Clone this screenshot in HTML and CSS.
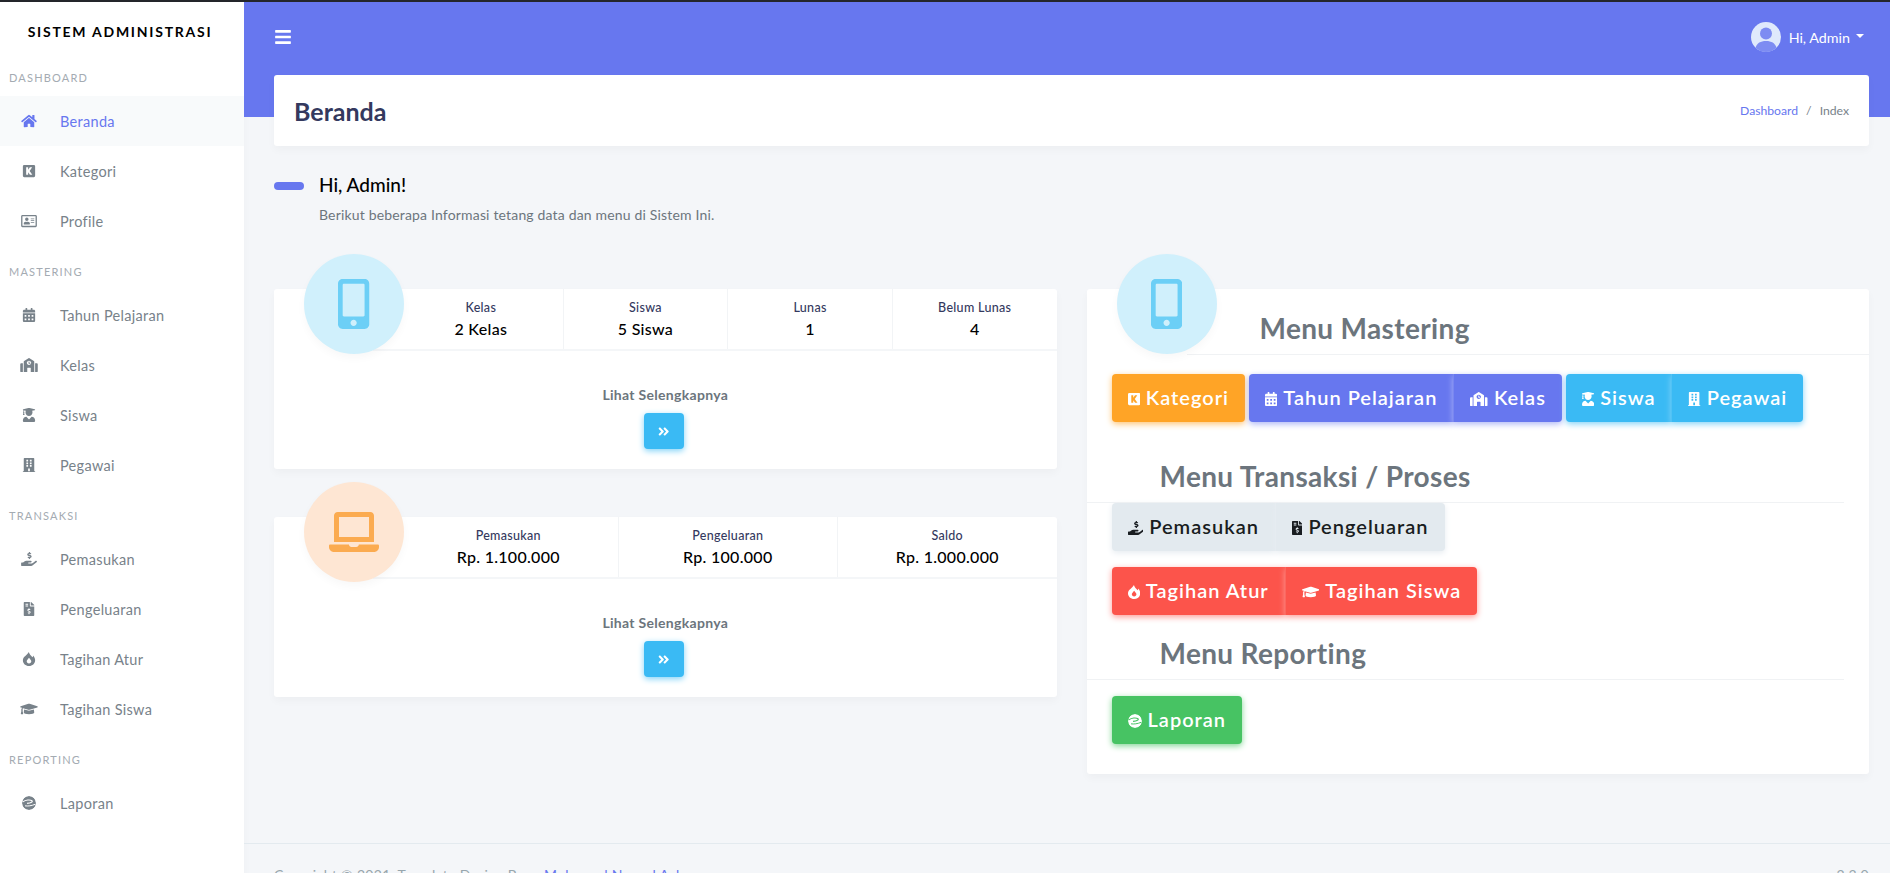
FILE: index.html
```html
<!DOCTYPE html>
<html lang="id">
  <head>
    <meta charset="UTF-8" />
    <meta name="viewport" content="width=device-width, initial-scale=1.0" />
    <title>Sistem Administrasi</title>
    <link rel="stylesheet" href="styles.css">
  </head>
  <body>
    <svg class="sprite" aria-hidden="true">
      <defs>
        <mask id="m-swirl">
          <circle cx="256" cy="256" r="256" fill="#fff"/>
          <path d="M30 215C130 140 300 125 365 175c40 35-30 80-180 95" fill="none" stroke="#000" stroke-width="40"/>
          <path d="M110 360c110 15 230 0 370-55" fill="none" stroke="#000" stroke-width="36"/>
        </mask>
        <path id="i-home" d="M280.37 148.26L96 300.11V464a16 16 0 0 0 16 16l112.06-.29a16 16 0 0 0 15.92-16V368a16 16 0 0 1 16-16h64a16 16 0 0 1 16 16v95.64a16 16 0 0 0 16 16.05L464 480a16 16 0 0 0 16-16V300L295.67 148.26a12.19 12.19 0 0 0-15.3 0zM571.6 251.47L488 182.56V44.05a12 12 0 0 0-12-12h-56a12 12 0 0 0-12 12v72.61L318.47 43a48 48 0 0 0-61 0L4.34 251.47a12 12 0 0 0-1.6 16.9l25.5 31A12 12 0 0 0 45.15 301l235.22-193.74a12.19 12.19 0 0 1 15.3 0L530.9 301a12 12 0 0 0 16.9-1.6l25.5-31a12 12 0 0 0-1.7-16.93z"/>
        <path id="i-kick" fill-rule="evenodd" d="M48 32h352a48 48 0 0 1 48 48v352a48 48 0 0 1-48 48H48a48 48 0 0 1-48-48V80a48 48 0 0 1 48-48zM120 120v272h72v-92l66 92h88l-98-138 92-134h-84l-64 92v-92z"/>
        <path id="i-idcard" fill-rule="evenodd" d="M528 32H48C21.5 32 0 53.5 0 80v352c0 26.5 21.5 48 48 48h480c26.5 0 48-21.5 48-48V80c0-26.5-21.5-48-48-48zm0 400H48V80h480zM208 256a64 64 0 1 0 0-128 64 64 0 0 0 0 128zm-90 128h180c12 0 22-8 22-20v-20c0-33-32-60-70-60-12 0-20 8-42 8s-30-8-42-8c-38 0-70 27-70 60v20c0 12 10 20 22 20zM360 320h112c4.400 0 8-3.600 8-8v-16c0-4.400-3.600-8-8-8H360c-4.400 0-8 3.600-8 8v16c0 4.400 3.600 8 8 8zm0-64h112c4.400 0 8-3.600 8-8v-16c0-4.400-3.600-8-8-8H360c-4.400 0-8 3.600-8 8v16c0 4.400 3.600 8 8 8zm0-64h112c4.400 0 8-3.600 8-8v-16c0-4.400-3.600-8-8-8H360c-4.400 0-8 3.600-8 8v16c0 4.400 3.600 8 8 8z"/>
        <path id="i-cal" d="M0 464c0 26.500 21.500 48 48 48h352c26.500 0 48-21.500 48-48V192H0v272zm320-196c0-6.600 5.400-12 12-12h40c6.600 0 12 5.400 12 12v40c0 6.600-5.400 12-12 12h-40c-6.600 0-12-5.400-12-12v-40zm0 128c0-6.600 5.400-12 12-12h40c6.600 0 12 5.400 12 12v40c0 6.600-5.400 12-12 12h-40c-6.600 0-12-5.400-12-12v-40zM192 268c0-6.600 5.400-12 12-12h40c6.600 0 12 5.400 12 12v40c0 6.600-5.400 12-12 12h-40c-6.600 0-12-5.400-12-12v-40zm0 128c0-6.600 5.400-12 12-12h40c6.600 0 12 5.400 12 12v40c0 6.600-5.400 12-12 12h-40c-6.600 0-12-5.400-12-12v-40zM64 268c0-6.600 5.400-12 12-12h40c6.600 0 12 5.400 12 12v40c0 6.600-5.400 12-12 12H76c-6.600 0-12-5.400-12-12v-40zm0 128c0-6.600 5.400-12 12-12h40c6.600 0 12 5.400 12 12v40c0 6.600-5.400 12-12 12H76c-6.600 0-12-5.400-12-12v-40zM400 64h-48V16c0-8.800-7.200-16-16-16h-32c-8.800 0-16 7.200-16 16v48H160V16c0-8.800-7.200-16-16-16h-32c-8.800 0-16 7.200-16 16v48H48C21.500 64 0 85.500 0 112v48h448v-48c0-26.500-21.500-48-48-48z"/>
        <path id="i-school" d="M0 224v272c0 8.840 7.160 16 16 16h80V192H32c-17.670 0-32 14.330-32 32zm360-48h-24v-40c0-4.420-3.580-8-8-8h-16c-4.420 0-8 3.580-8 8v64c0 4.420 3.580 8 8 8h48c4.420 0 8-3.580 8-8v-16c0-4.420-3.580-8-8-8zm137.750-63.960l-160-106.670a32.020 32.020 0 0 0-35.500 0l-160 106.670A32.002 32.002 0 0 0 128 138.660V512h128V368c0-8.840 7.160-16 16-16h96c8.840 0 16 7.160 16 16v144h128V138.670c0-10.700-5.350-20.700-14.250-26.630zM320 256c-44.180 0-80-35.820-80-80s35.820-80 80-80 80 35.820 80 80-35.820 80-80 80zm288-64h-64v320h80c8.840 0 16-7.160 16-16V224c0-17.670-14.330-32-32-32z"/>
        <path id="i-grad" d="M319.400 320.600L224 416l-95.400-95.400C57.100 323.700 0 382.200 0 454.400v9.600c0 26.500 21.500 48 48 48h352c26.500 0 48-21.500 48-48v-9.600c0-72.200-57.100-130.700-128.600-133.800zM13.600 79.800l6.400 1.500v58.400c-7 4.200-12 11.500-12 20.300 0 8.400 4.600 15.400 11.100 19.700L3.500 242c-1.700 6.900 2.100 14 7.600 14h41.800c5.500 0 9.300-7.100 7.600-14l-15.600-62.300C51.400 175.400 56 168.400 56 160c0-8.800-5-16.100-12-20.300V87.100l66 15.900c-8.600 17.200-14 36.400-14 57 0 70.700 57.300 128 128 128s128-57.300 128-128c0-20.600-5.300-39.800-14-57l96.300-23.200c18.200-4.400 18.200-27.100 0-31.500l-190.400-46c-13-3.100-26.700-3.100-39.700 0L13.600 48.200c-18.100 4.400-18.100 27.200 0 31.600z"/>
        <path id="i-building" d="M436 480h-20V24c0-13.255-10.745-24-24-24H56C42.745 0 32 10.745 32 24v456H12c-6.627 0-12 5.373-12 12v20h448v-20c0-6.627-5.373-12-12-12zM128 76c0-6.627 5.373-12 12-12h40c6.627 0 12 5.373 12 12v40c0 6.627-5.373 12-12 12h-40c-6.627 0-12-5.373-12-12V76zm0 96c0-6.627 5.373-12 12-12h40c6.627 0 12 5.373 12 12v40c0 6.627-5.373 12-12 12h-40c-6.627 0-12-5.373-12-12v-40zm52 148h-40c-6.627 0-12-5.373-12-12v-40c0-6.627 5.373-12 12-12h40c6.627 0 12 5.373 12 12v40c0 6.627-5.373 12-12 12zm76 160h-64v-84c0-6.627 5.373-12 12-12h40c6.627 0 12 5.373 12 12v84zm64-172c0 6.627-5.373 12-12 12h-40c-6.627 0-12-5.373-12-12v-40c0-6.627 5.373-12 12-12h40c6.627 0 12 5.373 12 12v40zm0-96c0 6.627-5.373 12-12 12h-40c-6.627 0-12-5.373-12-12v-40c0-6.627 5.373-12 12-12h40c6.627 0 12 5.373 12 12v40zm0-96c0 6.627-5.373 12-12 12h-40c-6.627 0-12-5.373-12-12V76c0-6.627 5.373-12 12-12h40c6.627 0 12 5.373 12 12v40z"/>
        <path id="i-hand" d="M271.060 144.300l54.270 14.300a8.590 8.590 0 0 1 6.630 8.100c0 4.600-4.090 8.400-9.120 8.400h-35.600a30 30 0 0 1-11.190-2.200c-5.240-2.200-11.280-1.700-15.300 2l-19 17.500a11.680 11.680 0 0 0-2.250 2.660 11.420 11.420 0 0 0 3.880 15.740 83.770 83.770 0 0 0 34.510 11.500V240c0 8.800 7.830 16 17.370 16h17.370c9.550 0 17.380-7.200 17.380-16V222.400c32.930-3.600 57.840-31 53.500-63-3.150-23-22.460-41.300-46.560-47.700L282.680 97.400a8.590 8.590 0 0 1-6.630-8.100c0-4.600 4.090-8.400 9.120-8.400h35.600A30 30 0 0 1 332 83.100c5.230 2.200 11.280 1.700 15.300-2l19-17.500A11.310 11.310 0 0 0 368.470 61a11.430 11.430 0 0 0-3.840-15.780 83.820 83.820 0 0 0-34.520-11.500V16c0-8.800-7.820-16-17.370-16H295.370C285.820 0 278 7.200 278 16V33.600c-32.890 3.600-57.850 31-53.510 63C227.630 119.600 247 137.900 271.060 144.300zM565.270 328.100c-11.800-10.700-30.200-10-42.600 0L430.270 402a63.640 63.640 0 0 1-40 14H272a16 16 0 0 1 0-32h78.290c15.900 0 30.710-10.900 33.250-26.600a31.200 31.200 0 0 0 .46-5.460A32 32 0 0 0 352 320H192a117.660 117.660 0 0 0-74.100 26.290L71.400 384H16A16 16 0 0 0 0 400v96a16 16 0 0 0 16 16H372.770a64 64 0 0 0 40-14L564 377a32 32 0 0 0 1.280-48.900z"/>
        <path id="i-invoice" d="M377 105L279.100 7c-4.500-4.500-10.600-7-17-7H256v128h128v-6.100c0-6.300-2.500-12.400-7-16.900zm-153 31V0H24C10.700 0 0 10.700 0 24v464c0 13.300 10.700 24 24 24h336c13.300 0 24-10.700 24-24V160H248c-13.200 0-24-10.800-24-24zM64 72c0-4.420 3.580-8 8-8h80c4.420 0 8 3.580 8 8v16c0 4.420-3.580 8-8 8H72c-4.420 0-8-3.580-8-8V72zm0 80v-16c0-4.420 3.580-8 8-8h80c4.420 0 8 3.580 8 8v16c0 4.420-3.580 8-8 8H72c-4.420 0-8-3.580-8-8zm144 263.880V440c0 4.420-3.580 8-8 8h-16c-4.420 0-8-3.580-8-8v-24.290c-11.290-.58-22.270-4.520-31.370-11.350-3.900-2.930-4.100-8.770-.57-12.140l11.750-11.210c2.770-2.640 6.890-2.760 10.130-.73 3.870 2.420 8.260 3.720 12.820 3.720h28.110c6.500 0 11.800-5.920 11.800-13.190 0-5.950-3.610-11.190-8.770-12.730l-45-13.500c-18.590-5.580-31.580-23.420-31.580-43.390 0-24.520 19.050-44.440 42.670-45.070V232c0-4.420 3.580-8 8-8h16c4.420 0 8 3.580 8 8v24.290c11.290.58 22.270 4.510 31.370 11.350 3.900 2.930 4.100 8.770.57 12.140l-11.750 11.210c-2.770 2.640-6.890 2.760-10.130.73-3.870-2.430-8.260-3.720-12.820-3.720h-28.110c-6.500 0-11.800 5.920-11.800 13.190 0 5.950 3.610 11.190 8.770 12.730l45 13.500c18.590 5.580 31.580 23.420 31.580 43.390 0 24.530-19.050 44.440-42.670 45.070z"/>
        <path id="i-fire" fill-rule="evenodd" d="M216 0c20 90 90 130 130 190 30-20 30-40 30-60 50 60 72 120 72 170 0 120-100 212-224 212S0 420 0 300C0 170 170 110 216 0zM224 420c50 0 84-36 84-80 0-40-44-70-84-130-40 60-84 90-84 130 0 44 34 80 84 80z"/>
        <path id="i-cap" d="M622.340 153.200L343.400 67.500c-15.200-4.670-31.600-4.670-46.790 0L17.660 153.200c-23.540 7.230-23.540 38.360 0 45.590l48.630 14.940c-10.670 13.190-17.230 29.280-17.880 46.900C38.780 266.150 32 276.110 32 288c0 10.780 5.680 19.850 13.860 25.650L20.330 428.530C18.110 438.520 25.710 448 35.940 448h56.110c10.240 0 17.840-9.480 15.620-19.470L82.140 313.650C90.320 307.850 96 298.780 96 288c0-11.570-6.470-21.250-15.660-26.870.76-15.020 8.440-28.300 20.690-36.720L296.600 284.500c9.060 2.780 26.440 6.250 46.790 0l278.950-85.700c23.550-7.240 23.550-38.360 0-45.600zM352.790 315.090c-28.530 8.760-52.840 3.920-65.590 0l-145.020-44.550L128 384c0 35.350 85.960 64 192 64s192-28.650 192-64l-14.180-113.470-145.030 44.560z"/>
        <g id="i-swirl" mask="url(#m-swirl)"><circle cx="256" cy="256" r="256"/></g>
        <path id="i-mobile" d="M272 0H48C21.500 0 0 21.500 0 48v416c0 26.500 21.500 48 48 48h224c26.500 0 48-21.500 48-48V48c0-26.500-21.500-48-48-48zM160 480c-17.700 0-32-14.300-32-32s14.300-32 32-32 32 14.300 32 32-14.300 32-32 32zm112-108c0 6.600-5.400 12-12 12H60c-6.600 0-12-5.400-12-12V60c0-6.600 5.400-12 12-12h200c6.600 0 12 5.400 12 12v312z"/>
        <path id="i-laptop" d="M624 416H381.540c-.74 19.810-14.710 32-32.740 32H288c-18.690 0-33.020-17.470-32.770-32H16c-8.800 0-16 7.200-16 16v16c0 35.200 28.800 64 64 64h512c35.200 0 64-28.800 64-64v-16c0-8.800-7.200-16-16-16zM576 48c0-26.400-21.600-48-48-48H112C85.600 0 64 21.600 64 48v336h512V48zm-64 272H128V64h384v256z"/>
        <path id="i-more" d="M224.300 273l-136 136c-9.400 9.400-24.600 9.400-33.900 0l-22.600-22.600c-9.400-9.400-9.400-24.600 0-33.900l96.400-96.400-96.400-96.400c-9.400-9.400-9.400-24.600 0-33.900L54.300 103c9.400-9.400 24.600-9.400 33.900 0l136 136c9.500 9.400 9.500 24.600.1 34zm192-34l-136-136c-9.400-9.400-24.600-9.400-33.900 0l-22.600 22.600c-9.400 9.400-9.400 24.600 0 33.900l96.400 96.400-96.400 96.400c-9.400 9.400-9.400 24.600 0 33.900l22.600 22.600c9.400 9.400 24.600 9.400 33.900 0l136-136c9.400-9.200 9.400-24.400 0-33.800z"/>
        <path id="i-bars" d="M16 132h416c8.837 0 16-7.163 16-16V76c0-8.837-7.163-16-16-16H16C7.163 60 0 67.163 0 76v40c0 8.837 7.163 16 16 16zm0 160h416c8.837 0 16-7.163 16-16v-40c0-8.837-7.163-16-16-16H16c-8.837 0-16 7.163-16 16v40c0 8.837 7.163 16 16 16zm0 160h416c8.837 0 16-7.163 16-16v-40c0-8.837-7.163-16-16-16H16c-8.837 0-16 7.163-16 16v40c0 8.837 7.163 16 16 16z"/>
      </defs>
    </svg>

    <div class="app">
      <aside class="sidebar">
        <div class="brand">Sistem Administrasi</div>

        <div class="menu-header">Dashboard</div>
        <a class="nav-link active"><svg viewBox="0 0 576 512"><use href="#i-home"/></svg>Beranda</a>
        <a class="nav-link"><svg viewBox="0 0 448 512"><use href="#i-kick"/></svg>Kategori</a>
        <a class="nav-link"><svg viewBox="0 0 576 512"><use href="#i-idcard"/></svg>Profile</a>

        <div class="menu-header">Mastering</div>
        <a class="nav-link"><svg viewBox="0 0 448 512"><use href="#i-cal"/></svg>Tahun Pelajaran</a>
        <a class="nav-link"><svg viewBox="0 0 640 512"><use href="#i-school"/></svg>Kelas</a>
        <a class="nav-link"><svg viewBox="0 0 448 512"><use href="#i-grad"/></svg>Siswa</a>
        <a class="nav-link"><svg viewBox="0 0 448 512"><use href="#i-building"/></svg>Pegawai</a>

        <div class="menu-header">Transaksi</div>
        <a class="nav-link"><svg viewBox="0 0 576 512"><use href="#i-hand"/></svg>Pemasukan</a>
        <a class="nav-link"><svg viewBox="0 0 384 512"><use href="#i-invoice"/></svg>Pengeluaran</a>
        <a class="nav-link"><svg viewBox="0 0 448 512"><use href="#i-fire"/></svg>Tagihan Atur</a>
        <a class="nav-link"><svg viewBox="0 0 640 512"><use href="#i-cap"/></svg>Tagihan Siswa</a>

        <div class="menu-header">Reporting</div>
        <a class="nav-link"><svg viewBox="0 0 512 512"><use href="#i-swirl"/></svg>Laporan</a>
      </aside>

      <div class="main">
        <nav class="navbar">
          <svg class="nav-bars" viewBox="0 0 448 512"><use href="#i-bars"/></svg>
          <div class="nav-user">
            <svg class="avatar" viewBox="0 0 30 30">
              <circle cx="15" cy="15" r="15" fill="#dfe9fc"/>
              <circle cx="15" cy="11.500" r="6" fill="#7d8cf2"/>
              <path d="M4.500 25.700c1.500-4.700 5-6.700 10.500-6.700s9 2 10.500 6.700a15 15 0 0 1-21 0z" fill="#7d8cf2"/>
            </svg>
            Hi, Admin
            <span class="caret"></span>
          </div>
        </nav>

        <section class="content">
          <header class="page-head">
            <h1>Beranda</h1>
            <div class="breadcrumb">
              <a>Dashboard</a>
              <span class="sep">/</span>
              <span>Index</span>
            </div>
          </header>

          <div class="greeting">
            <span class="greeting-bar"></span>
            <div>
              <h2>Hi, Admin!</h2>
              <p>Berikut beberapa Informasi tetang data dan menu di Sistem Ini.</p>
            </div>
          </div>

          <div class="columns">
            <div class="col-left">
              <div class="card stat-card">
                <div class="card-icon icon-blue"><svg viewBox="0 0 320 512"><use href="#i-mobile"/></svg></div>
                <div class="stats">
                  <div class="stat"><div class="stat-label">Kelas</div><div class="stat-value">2 Kelas</div></div>
                  <div class="stat"><div class="stat-label">Siswa</div><div class="stat-value">5 Siswa</div></div>
                  <div class="stat"><div class="stat-label">Lunas</div><div class="stat-value">1</div></div>
                  <div class="stat"><div class="stat-label">Belum Lunas</div><div class="stat-value">4</div></div>
                </div>
                <div class="more">
                  <span>Lihat Selengkapnya</span>
                  <a class="more-btn"><svg viewBox="0 0 448 512"><use href="#i-more"/></svg></a>
                </div>
              </div>

              <div class="card stat-card">
                <div class="card-icon icon-orange"><svg viewBox="0 0 640 512"><use href="#i-laptop"/></svg></div>
                <div class="stats">
                  <div class="stat"><div class="stat-label">Pemasukan</div><div class="stat-value">Rp. 1.100.000</div></div>
                  <div class="stat"><div class="stat-label">Pengeluaran</div><div class="stat-value">Rp. 100.000</div></div>
                  <div class="stat"><div class="stat-label">Saldo</div><div class="stat-value">Rp. 1.000.000</div></div>
                </div>
                <div class="more">
                  <span>Lihat Selengkapnya</span>
                  <a class="more-btn"><svg viewBox="0 0 448 512"><use href="#i-more"/></svg></a>
                </div>
              </div>
            </div>

            <div class="card menu-card">
              <div class="card-icon icon-blue"><svg viewBox="0 0 320 512"><use href="#i-mobile"/></svg></div>

              <h3 class="menu-title first">Menu Mastering</h3>
              <div class="btn-row">
                <a class="btn orange"><svg viewBox="0 0 448 512"><use href="#i-kick"/></svg>Kategori</a>
                <div class="btn-group">
                  <a class="btn primary"><svg viewBox="0 0 448 512"><use href="#i-cal"/></svg>Tahun Pelajaran</a>
                  <a class="btn primary"><svg viewBox="0 0 640 512"><use href="#i-school"/></svg>Kelas</a>
                </div>
                <div class="btn-group">
                  <a class="btn info"><svg viewBox="0 0 448 512"><use href="#i-grad"/></svg>Siswa</a>
                  <a class="btn info"><svg viewBox="0 0 448 512"><use href="#i-building"/></svg>Pegawai</a>
                </div>
              </div>

              <h3 class="menu-title second">Menu Transaksi / Proses</h3>
              <div class="btn-row tight">
                <div class="btn-group">
                  <a class="btn light"><svg viewBox="0 0 576 512"><use href="#i-hand"/></svg>Pemasukan</a>
                  <a class="btn light"><svg viewBox="0 0 384 512"><use href="#i-invoice"/></svg>Pengeluaran</a>
                </div>
              </div>
              <div class="btn-row">
                <div class="btn-group">
                  <a class="btn danger"><svg viewBox="0 0 448 512"><use href="#i-fire"/></svg>Tagihan Atur</a>
                  <a class="btn danger"><svg viewBox="0 0 640 512"><use href="#i-cap"/></svg>Tagihan Siswa</a>
                </div>
              </div>

              <h3 class="menu-title third">Menu Reporting</h3>
              <div class="btn-row">
                <a class="btn success"><svg viewBox="0 0 512 512"><use href="#i-swirl"/></svg>Laporan</a>
              </div>
            </div>
          </div>
        </section>

        <footer class="footer">
          <div>Copyright &copy; 2021, Template Design By <a>Muhamad Nauval Azhar</a></div>
          <div>2.3.0</div>
        </footer>
      </div>
    </div>
  </body>
</html>
```

FILE: styles.css
```css
* {
  box-sizing: border-box;
}
html,
body {
  height: 100%;
}
body {
  margin: 0;
  overflow: hidden;
  background-color: #f4f6f9;
  color: #6c757d;
  font-family: "Lato", "Noto Sans", sans-serif;
  font-size: 14px;
}
h1,
h2,
h3,
p {
  margin: 0;
}
svg {
  fill: currentColor;
}
.sprite {
  display: block;
  width: 0;
  height: 0;
}

.app {
  display: flex;
  min-height: 100%;
  border-top: 2px solid #24262b;
}

/* sidebar */
.sidebar {
  flex: 0 0 244px;
  background-color: #fff;
  box-shadow: 0 4px 8px rgba(0, 0, 0, 0.03);
}
.brand {
  display: flex;
  align-items: center;
  justify-content: center;
  height: 50px;
  padding: 8px 4px 0 0;
  color: #000;
  font-size: 14px;
  font-weight: 700;
  letter-spacing: 1.75px;
  text-transform: uppercase;
}
.menu-header {
  height: 44px;
  padding: 18px 0 0 9px;
  color: #a4abb2;
  font-size: 11px;
  font-weight: 400;
  letter-spacing: 1.2px;
  line-height: 16px;
  text-transform: uppercase;
}
.nav-link {
  display: flex;
  align-items: center;
  gap: 20px;
  height: 50px;
  padding-left: 18px;
  color: #78828a;
  font-size: 14.5px;
  letter-spacing: 0.3px;
}
.nav-link svg {
  flex: 0 0 22px;
  height: 14px;
}
.nav-link.active {
  background-color: #f8fafb;
  color: #6777ef;
  font-weight: 400;
}

/* main */
.main {
  flex: 1;
  min-width: 0;
  background: linear-gradient(#6777ef 115px, transparent 115px);
}
.navbar {
  display: flex;
  align-items: center;
  justify-content: space-between;
  height: 73px;
  padding: 0 26px 3px 31px;
  color: #fff;
}
.nav-bars {
  width: 16px;
  height: 18px;
}
.nav-user {
  display: flex;
  align-items: center;
  font-size: 14.3px;
}
.avatar {
  width: 30px;
  height: 30px;
  margin-right: 8px;
}
.caret {
  width: 0;
  height: 0;
  margin-left: 6px;
  margin-bottom: 2px;
  border-top: 4.500px solid #fff;
  border-left: 4.500px solid transparent;
  border-right: 4.500px solid transparent;
}
.content {
  padding: 0 21px 0 30px;
}
.page-head {
  display: flex;
  align-items: center;
  justify-content: space-between;
  height: 71px;
  padding: 0 20px;
  border-radius: 3px;
  background-color: #fff;
  box-shadow: 0 4px 8px rgba(0, 0, 0, 0.03);
}
.page-head h1 {
  padding-top: 1px;
  color: #34395e;
  font-size: 25px;
  font-weight: 700;
}
.breadcrumb {
  display: flex;
  gap: 8px;
  font-size: 12.2px;
  color: #78828a;
}
.breadcrumb a {
  color: #6777ef;
}

.greeting {
  display: flex;
  gap: 15px;
  margin-top: 27px;
}
.greeting-bar {
  flex: 0 0 30px;
  height: 8px;
  margin-top: 9px;
  border-radius: 5px;
  background-color: #6777ef;
}
.greeting h2 {
  color: #000;
  font-size: 19px;
  font-weight: 500;
  line-height: 24px;
}
.greeting p {
  margin-top: 8px;
  font-size: 14px;
  line-height: 20px;
  letter-spacing: 0.17px;
  color: #6c757d;
}

.columns {
  display: grid;
  grid-template-columns: 1fr 1fr;
  gap: 30px;
  margin-top: 64px;
}
.col-left {
  display: flex;
  flex-direction: column;
  gap: 48px;
}
.card {
  position: relative;
  border-radius: 3px;
  background-color: #fff;
  box-shadow: 0 4px 8px rgba(0, 0, 0, 0.03);
}
.card-icon {
  position: absolute;
  left: 30px;
  top: -35px;
  display: flex;
  align-items: center;
  justify-content: center;
  width: 100px;
  height: 100px;
  border-radius: 50%;
  box-shadow: 0 4px 8px rgba(0, 0, 0, 0.03);
}
.card-icon svg {
  height: 50px;
}
.icon-blue {
  background-color: #d0f0fc;
  color: #6ccff6;
}
.icon-orange {
  background-color: #fee6d3;
  color: #fbab50;
}
.icon-orange svg {
  width: 50px;
}

/* stat cards */
.stat-card {
  height: 180px;
}
.stats {
  display: flex;
  height: 62px;
  margin-left: 99px;
  padding-left: 26px;
  border-bottom: 2px solid #f4f6f8;
}
.stat {
  flex: 1;
  padding-top: 11px;
  border-right: 1px solid #f2f4f6;
  text-align: center;
}
.stat:last-child {
  border-right: 0;
}
.stat-label {
  color: #34395e;
  font-size: 12.5px;
  font-weight: 500;
  line-height: 16px;
  letter-spacing: 0.3px;
}
.stat-value {
  margin-top: 2px;
  color: #000;
  font-size: 16px;
  font-weight: 500;
  letter-spacing: 0.3px;
  line-height: 22px;
}
.more {
  display: flex;
  flex-direction: column;
  align-items: center;
  padding-top: 35px;
  color: #6c757d;
  font-size: 14px;
  font-weight: 700;
  letter-spacing: 0.3px;
  line-height: 18px;
}
.more-btn {
  display: flex;
  align-items: center;
  justify-content: center;
  width: 40px;
  height: 36px;
  margin: 9px 3px 0 0;
  border-radius: 4px;
  background-color: #3abaf4;
  box-shadow: 0 2px 6px #82d3f8;
  color: #fff;
}
.more-btn svg {
  height: 13px;
}

/* menu card */
.menu-card {
  padding: 16px 0 30px;
}
.menu-title {
  display: flex;
  align-items: center;
  height: 50px;
  padding: 0 0 3px 73px;
  border-bottom: 1px solid #f0f2f4;
  color: #6c757d;
  font-size: 28px;
  font-weight: 700;
  letter-spacing: 0.35px;
}
.menu-title.first {
  margin-left: 100px;
}
.menu-title.second {
  margin: 31px 25px 0 0;
}
.menu-title.third {
  margin: 15px 25px 0 0;
}
.btn-row {
  display: flex;
  gap: 4px;
  margin: 16px 0 0 25px;
}
.menu-title.first + .btn-row {
  margin-top: 19px;
}
.btn-row.tight {
  margin-top: 0;
}
.btn-group {
  display: flex;
  border-radius: 4px;
}
.btn {
  display: flex;
  align-items: center;
  gap: 6px;
  height: 48px;
  padding: 0 16px 3px;
  border-radius: 4px;
  color: #fff;
  font-size: 20px;
  font-weight: 600;
  letter-spacing: 1px;
}
.btn svg {
  height: 14px;
  width: auto;
  margin-top: 4px;
}
.btn-group .btn:first-child {
  border-top-right-radius: 0;
  border-bottom-right-radius: 0;
}
.btn-group .btn:last-child {
  border-top-left-radius: 0;
  border-bottom-left-radius: 0;
  border-left: 1px solid rgba(255, 255, 255, 0.12);
}
.orange {
  background-color: #ffa426;
  box-shadow: 0 2px 6px #ffc473;
}
.primary {
  background-color: #6777ef;
  box-shadow: 0 2px 6px #acb5f6;
}
.info {
  background-color: #3abaf4;
  box-shadow: 0 2px 6px #82d3f8;
}
.light {
  background-color: #e3eaef;
  box-shadow: 0 2px 6px #e6ecf1;
  color: #191d21;
}
.danger {
  background-color: #fc544b;
  box-shadow: 0 2px 6px #fd9b96;
}
.success {
  background-color: #47c363;
  box-shadow: 0 2px 6px #81d694;
}

.footer {
  display: flex;
  justify-content: space-between;
  margin-top: 69px;
  padding: 22px 21px 19px 30px;
  border-top: 1px solid #e3eaef;
  color: #98a6ad;
  font-size: 14px;
  letter-spacing: 0.3px;
}
.footer a {
  margin-left: 16px;
  color: #6777ef;
}
```
